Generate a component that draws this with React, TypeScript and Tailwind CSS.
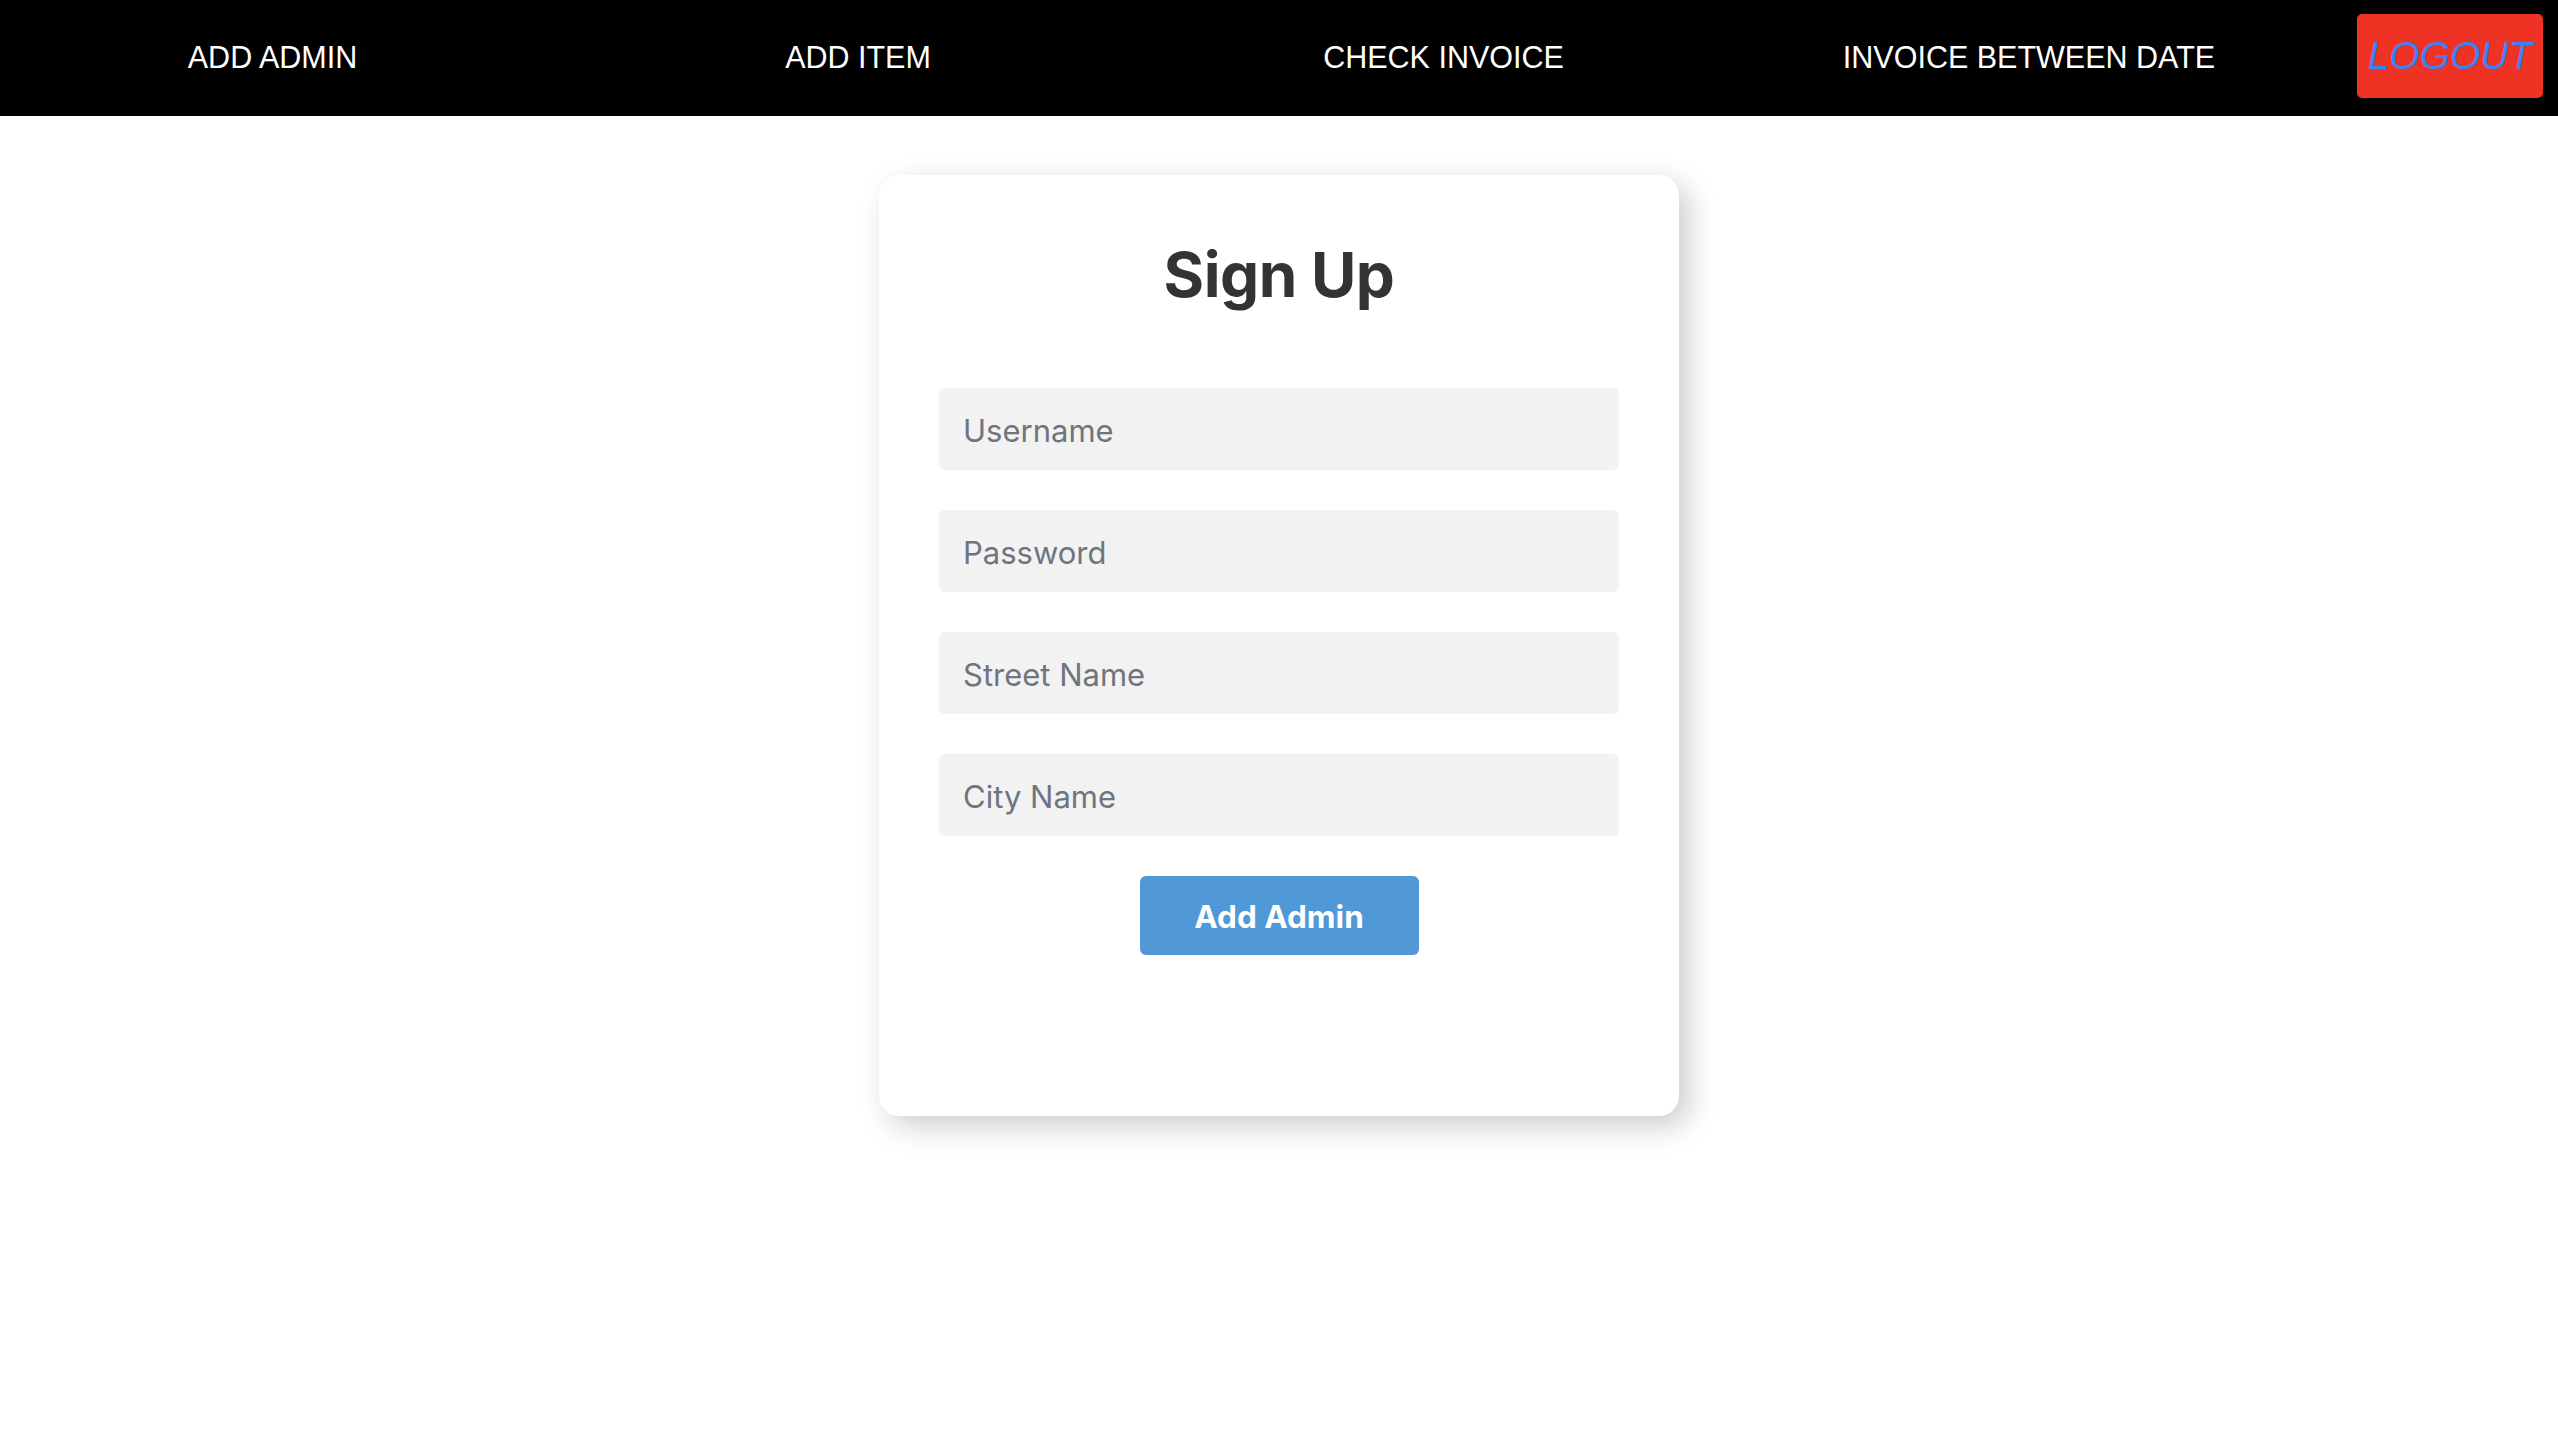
import React from "react";

const links = ["ADD ADMIN", "ADD ITEM", "CHECK INVOICE", "INVOICE BETWEEN DATE"];
const fields = ["Username", "Password", "Street Name", "City Name"];

export default function App() {
  return (
    <div className="min-h-screen w-full bg-white">
      <nav
        className="flex h-[116px] w-full items-center bg-black"
        style={{ fontFamily: '"Liberation Sans", Arial, Helvetica, sans-serif' }}
      >
        <div className="mb-[3px] flex gap-[40.5px]">
          {links.map((l) => (
            <a
              key={l}
              href="#"
              className="block w-[545px] text-center text-[30.5px] leading-[36px] text-white no-underline"
            >
              {l}
            </a>
          ))}
        </div>
        <button className="mb-[4px] ml-auto mr-[15px] flex h-[84px] w-[186px] items-center justify-center rounded-[5px] bg-[#ee3224] text-[39px] italic leading-[44px] text-[#3b82f6]">
          LOGOUT
        </button>
      </nav>

      <div
        className="flex justify-center pt-[59px]"
        style={{ fontFamily: 'Inter, "Noto Sans", sans-serif' }}
      >
        <div className="flex w-[800px] flex-col items-center rounded-[20px] bg-white px-[60px] pb-[161px] pt-[64px] shadow-[10px_10px_30px_rgba(0,0,0,0.2)]">
          <h1 className="mb-[77px] text-[62px] font-bold leading-[72px] tracking-[-0.5px] text-[#333333]">
            Sign Up
          </h1>
          <div className="flex w-full flex-col gap-[40px]">
            {fields.map((f) => (
              <input
                key={f}
                type={f === "Password" ? "password" : "text"}
                placeholder={f}
                className="h-[82px] w-full rounded-[6px] bg-[#f2f2f2] pl-[24px] pt-[2px] text-[31px] text-[#333] outline-none placeholder:text-[#6f757d]"
              />
            ))}
          </div>
          <button className="mt-[40px] h-[79px] w-[279px] rounded-[6px] bg-[#5098d6] pt-[2px] text-[31.5px] font-bold text-white">
            Add Admin
          </button>
        </div>
      </div>
    </div>
  );
}
